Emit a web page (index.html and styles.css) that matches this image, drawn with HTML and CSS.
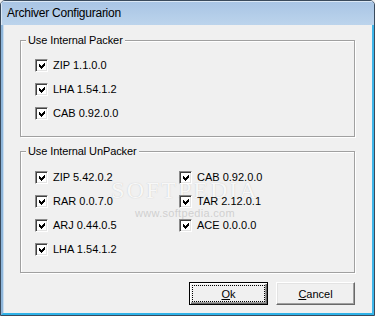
FILE: index.html
```html
<!DOCTYPE html>
<html>
<head>
<meta charset="utf-8">
<title>Archiver Configurarion</title>
<link rel="stylesheet" href="styles.css">
</head>
<body>
<div class="window">
  <div class="titlebar">Archiver Configurarion</div>
  <div class="client">
    <fieldset class="group g1">
      <legend>Use Internal Packer</legend>
      <div class="list">
        <label class="cb"><span class="box"><svg viewBox="0 0 7 7" width="7" height="7"><polygon points="0,2 2,4 6,0 6,3 2,7 0,5"/></svg></span><span>ZIP 1.1.0.0</span></label>
        <label class="cb"><span class="box"><svg viewBox="0 0 7 7" width="7" height="7"><polygon points="0,2 2,4 6,0 6,3 2,7 0,5"/></svg></span><span>LHA 1.54.1.2</span></label>
        <label class="cb"><span class="box"><svg viewBox="0 0 7 7" width="7" height="7"><polygon points="0,2 2,4 6,0 6,3 2,7 0,5"/></svg></span><span>CAB 0.92.0.0</span></label>
      </div>
    </fieldset>
    <fieldset class="group g2">
      <legend>Use Internal UnPacker</legend>
      <div class="watermark"><span class="wm-big">SOFTPEDIA</span><span class="wm-small">www.softpedia.com</span></div>
      <div class="grid">
        <label class="cb"><span class="box"><svg viewBox="0 0 7 7" width="7" height="7"><polygon points="0,2 2,4 6,0 6,3 2,7 0,5"/></svg></span><span>ZIP 5.42.0.2</span></label>
        <label class="cb"><span class="box"><svg viewBox="0 0 7 7" width="7" height="7"><polygon points="0,2 2,4 6,0 6,3 2,7 0,5"/></svg></span><span>CAB 0.92.0.0</span></label>
        <label class="cb"><span class="box"><svg viewBox="0 0 7 7" width="7" height="7"><polygon points="0,2 2,4 6,0 6,3 2,7 0,5"/></svg></span><span>RAR 0.0.7.0</span></label>
        <label class="cb"><span class="box"><svg viewBox="0 0 7 7" width="7" height="7"><polygon points="0,2 2,4 6,0 6,3 2,7 0,5"/></svg></span><span>TAR 2.12.0.1</span></label>
        <label class="cb"><span class="box"><svg viewBox="0 0 7 7" width="7" height="7"><polygon points="0,2 2,4 6,0 6,3 2,7 0,5"/></svg></span><span>ARJ 0.44.0.5</span></label>
        <label class="cb"><span class="box"><svg viewBox="0 0 7 7" width="7" height="7"><polygon points="0,2 2,4 6,0 6,3 2,7 0,5"/></svg></span><span>ACE 0.0.0.0</span></label>
        <label class="cb"><span class="box"><svg viewBox="0 0 7 7" width="7" height="7"><polygon points="0,2 2,4 6,0 6,3 2,7 0,5"/></svg></span><span>LHA 1.54.1.2</span></label>
      </div>
    </fieldset>
    <div class="buttons">
      <button class="btn default"><span class="focus"><u>O</u>k</span></button>
      <button class="btn"><span class="nofocus"><u>C</u>ancel</span></button>
    </div>
  </div>
</div>
</body>
</html>
```
FILE: styles.css
```css
html, body {
  margin: 0;
  padding: 0;
  background: #f0f0f0;
}
body {
  width: 375px;
  height: 316px;
  overflow: hidden;
}
.window {
  box-sizing: border-box;
  width: 375px;
  height: 316px;
  border: 1px solid #3a4a5c;
  border-radius: 5px 5px 0 0;
  background: #b9d1ea;
  display: flex;
  flex-direction: column;
  overflow: hidden;
}
.titlebar {
  height: 24px;
  flex: none;
  box-sizing: border-box;
  padding: 4px 0 0 6px;
  background: linear-gradient(#a8c4e4, #bcd4ec);
  box-shadow: inset 1px 1px 0 #dbe8f5;
  font-family: "Liberation Sans", Arial, sans-serif;
  font-size: 12px;
  letter-spacing: -0.25px;
  line-height: 16px;
  color: #000;
}
.client {
  flex: 1;
  background: #f0f0f0;
  border-left: 2px solid #8fb6da;
  border-right: 2px solid #3fb6ea;
  border-bottom: 2px solid #2fb2e8;
  box-shadow: inset 1px 0 0 #c9dcee;
  padding: 8px 17px 0 17px;
  display: flex;
  flex-direction: column;
  font-family: "Liberation Sans", Arial, sans-serif;
  font-size: 11px;
  color: #000;
}
.group {
  margin: 0;
  padding: 6px 14px 11px 14px;
  border: 1px solid #a0a0a0;
  box-shadow: 1px 1px 0 #fff, inset 1px 1px 0 #fff;
  min-inline-size: 0;
  position: relative;
}
.group legend {
  padding: 0 2px;
  margin-left: -9px;
  line-height: 14px;
  font-size: 11px;
  letter-spacing: -0.1px;
  background: #f0f0f0;
}
.g2 {
  margin-top: 7px;
  padding-top: 7px;
}
.list {
  display: flex;
  flex-direction: column;
}
.grid {
  position: relative;
  z-index: 1;
  display: grid;
  grid-template-columns: 144px 1fr;
  grid-auto-rows: 24px;
}
.cb {
  height: 24px;
  display: flex;
  align-items: center;
  gap: 5px;
  white-space: nowrap;
}
.box {
  box-sizing: border-box;
  width: 13px;
  height: 13px;
  flex: none;
  background: #fff;
  border-top: 1px solid #8a8a8a;
  border-left: 1px solid #8a8a8a;
  border-right: 1px solid #fff;
  border-bottom: 1px solid #fff;
  box-shadow: inset 1px 1px 0 #404040, inset -1px -1px 0 #e3e3e3;
  display: flex;
  align-items: center;
  justify-content: center;
  padding: 1px 0 0 1px;
}
.box svg {
  display: block;
  fill: #000;
  shape-rendering: crispEdges;
}
.watermark {
  position: absolute;
  z-index: 0;
  left: 101px;
  top: 20px;
  width: 126px;
  display: flex;
  flex-direction: column;
  align-items: center;
  pointer-events: none;
}
.wm-big {
  font-family: "Liberation Serif", serif;
  font-size: 24px;
  letter-spacing: 2px;
  color: rgba(255, 255, 255, 0.9);
  text-shadow: 0 0 1px rgba(150, 150, 150, 0.55);
  line-height: 24px;
}
.wm-small {
  font-family: "Liberation Sans", sans-serif;
  font-size: 11px;
  letter-spacing: 0.3px;
  color: rgba(185, 185, 185, 0.6);
  line-height: 14px;
  margin-top: 4px;
}
.buttons {
  margin-top: 9px;
  display: flex;
  justify-content: flex-end;
  gap: 8px;
}
.btn {
  box-sizing: border-box;
  width: 79px;
  height: 23px;
  margin: 0;
  padding: 0;
  background: #f0f0f0;
  font-family: "Liberation Sans", Arial, sans-serif;
  font-size: 11px;
  color: #000;
  border: 1px solid;
  border-color: #fff #696969 #696969 #fff;
  box-shadow: inset -1px -1px 0 #a0a0a0, inset 1px 1px 0 #e3e3e3;
  display: flex;
  align-items: stretch;
  justify-content: stretch;
}
.btn.default {
  border: 1px solid #000;
  box-shadow: inset 1px 1px 0 #fff, inset -1px -1px 0 #696969, inset -2px -2px 0 #a0a0a0;
  padding: 2px;
}
.focus, .nofocus {
  flex: 1;
  display: flex;
  align-items: center;
  justify-content: center;
}
.focus {
  border: 1px dotted #000;
}
.btn u {
  text-decoration: underline;
}
```
